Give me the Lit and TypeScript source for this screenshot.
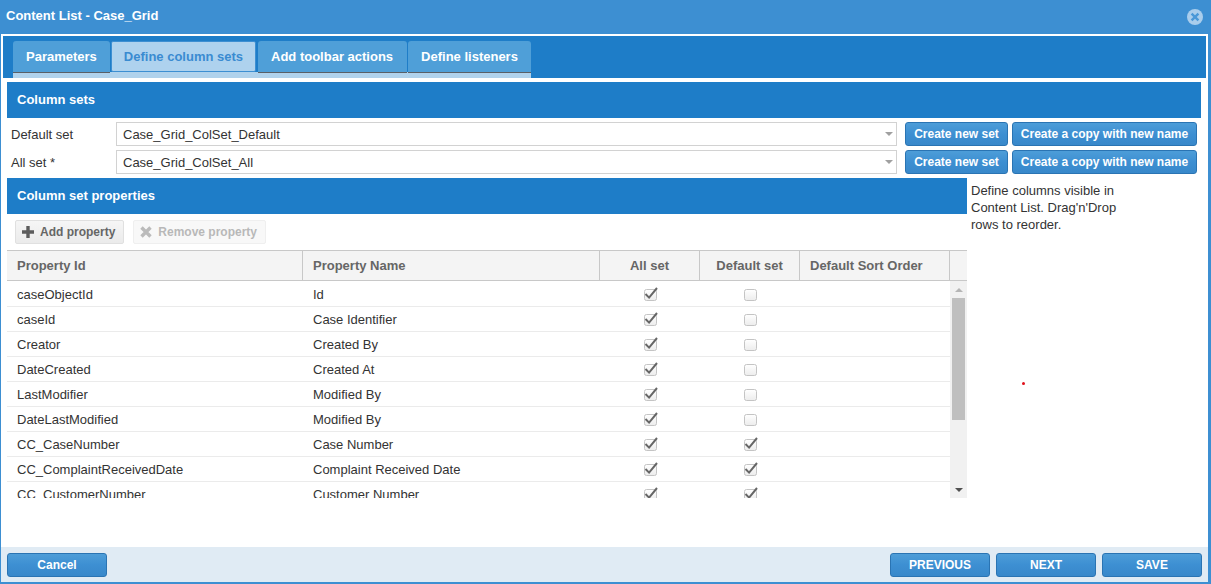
import { LitElement, html, css, svg } from 'lit';
import { customElement } from 'lit/decorators.js';

const rows = [
    ['caseObjectId', 'Id', true, false],
    ['caseId', 'Case Identifier', true, false],
    ['Creator', 'Created By', true, false],
    ['DateCreated', 'Created At', true, false],
    ['LastModifier', 'Modified By', true, false],
    ['DateLastModified', 'Modified By', true, false],
    ['CC_CaseNumber', 'Case Number', true, true],
    ['CC_ComplaintReceivedDate', 'Complaint Received Date', true, true],
    ['CC_CustomerNumber', 'Customer Number', true, true],
] as [string, string, boolean, boolean][];

const tabs = ['Parameters', 'Define column sets', 'Add toolbar actions', 'Define listeners'];

@customElement('app-root')
export class AppRoot extends LitElement {
    static styles = css`
     :host {
        display: block;
        width: 1211px;
        height: 584px;
        overflow: hidden;
        font-family: "Liberation Sans", Arial, sans-serif;
        font-size: 13px;
        color: #333;
     }

     .dialog {
        height: 584px;
        box-sizing: border-box;
        display: flex;
        flex-direction: column;
        background: #3d8fd2;
        padding: 0 3px 2px 1px;
        position: relative;
     }

     .title {
        height: 34px;
        flex: none;
        box-sizing: border-box;
        display: flex;
        align-items: center;
        justify-content: space-between;
        padding: 0 5px 3px;
        color: #fff;
        font-weight: bold;
        font-size: 13px;
     }

     .close { display: block; margin-top: 2px; }

     .body {
        flex: 1;
        min-height: 0;
        background: #fff;
        padding: 2px 2px 0 2px;
        display: flex;
        flex-direction: column;
     }

     .tabstrip {
        height: 42px;
        flex: none;
        background: #1e7dc8;
        padding: 5px 0 0 10px;
        box-sizing: border-box;
     }

     .tabs {
        display: inline-flex;
        height: 37px;
        background: linear-gradient(#1e7dc8 31px, #b0d2ec 31px);
        gap: 1px;
        align-items: flex-start;
     }

     .tab {
        height: 32px;
        box-sizing: border-box;
        padding: 0 13px;
        display: flex;
        align-items: center;
        background: #4f9fd8;
        border-bottom: 1px solid #5a5f66;
        border-radius: 3px 3px 0 0;
        color: #fff;
        font-weight: bold;
        font-size: 13px;
     }

     .tab:nth-child(3) { padding-right: 14px; }

     .tab.active {
        height: 31px;
        background: #aed2ee;
        color: #3a8bd1;
        border: 1px solid #3d8fd2;
        margin-right: 1px;
        padding: 0 12px;
        border-radius: 2px;
     }

     .section {
        background: #1e7dc8;
        color: #fff;
        font-weight: bold;
        font-size: 13px;
        height: 36px;
        box-sizing: border-box;
        display: flex;
        align-items: center;
        padding: 0 0 2px 10px;
        flex: none;
     }

     .content {
        flex: 1;
        min-height: 0;
        padding: 4px 5px 0 4px;
        display: flex;
        flex-direction: column;
     }

     .sets {
        display: flex;
        flex-direction: column;
        gap: 4px;
        padding: 4px 4px 4px 0;
     }

     .setrow {
        display: flex;
        align-items: center;
        height: 24px;
     }

     .setrow label {
        width: 105px;
        padding-left: 4px;
        flex: none;
     }

     .select {
        width: 781px;
        height: 24px;
        box-sizing: border-box;
        border: 1px solid #d2d2d2;
        display: flex;
        align-items: center;
        justify-content: space-between;
        padding: 0 3px 0 6px;
        margin-right: 8px;
        color: #333;
     }

     .caret {
        width: 0;
        height: 0;
        border-left: 4px solid transparent;
        border-right: 4px solid transparent;
        border-top: 4px solid #a0a0a0;
     }

     .btn {
        height: 24px;
        box-sizing: border-box;
        border: 1px solid #2a74b3;
        border-radius: 3px;
        background: linear-gradient(#4d9dd8, #3d8fd2 50%, #3888ca);
        color: #fff;
        font-weight: bold;
        font-size: 12px;
        display: flex;
        align-items: center;
        justify-content: center;
     }

     .btn.new { width: 103px; margin-right: 4px; }
     .btn.copy { width: 185px; }

     .lower {
        display: flex;
        flex: 1;
        min-height: 0;
     }

     .left {
        width: 960px;
        flex: none;
     }

     .help {
        width: 150px;
        padding: 4px 0 0 4px;
        line-height: 17px;
     }

     .toolbar {
        display: flex;
        gap: 9px;
        padding: 6px 8px;
     }

     .tool {
        height: 24px;
        box-sizing: border-box;
        border: 1px solid #e0e0e0;
        border-radius: 2px;
        background: linear-gradient(#f6f6f6, #ebebeb);
        display: flex;
        align-items: center;
        gap: 5px;
        padding: 0 8px 0 5px;
        color: #666;
        font-weight: bold;
        font-size: 12px;
     }

     .tool.disabled {
        background: #f8f8f8;
        border-color: #efefef;
        color: #b8b8b8;
     }

     .head {
        display: grid;
        grid-template-columns: 296px 297px 100px 100px 150px 17px;
        height: 31px;
        box-sizing: border-box;
        background: #f4f4f4;
        border-top: 1px solid #c8c8c8;
        border-bottom: 1px solid #c8c8c8;
        color: #666;
        font-weight: bold;
     }

     .head > div {
        display: flex;
        align-items: center;
        padding-left: 10px;
        border-right: 1px solid #c8c8c8;
     }

     .head > div.center {
        justify-content: center;
        padding-left: 0;
     }

     .head > div:last-child { border-right: none; }

     .gridbody {
        display: flex;
        height: 217px;
        overflow: hidden;
     }

     .gridrows {
        width: 943px;
        flex: none;
        padding-top: 1px;
     }

     .row {
        display: grid;
        grid-template-columns: 296px 297px 100px 100px 150px;
        height: 25px;
        box-sizing: border-box;
        border-bottom: 1px solid #ebebeb;
     }

     .row > div {
        display: flex;
        align-items: center;
        padding-left: 10px;
     }

     .row > div.center {
        justify-content: center;
        padding-left: 0;
     }

     .scroll {
        width: 17px;
        background: #f1f1f1;
        display: flex;
        flex-direction: column;
        align-items: center;
     }

     .arrow {
        height: 17px;
        flex: none;
        display: flex;
        align-items: center;
        justify-content: center;
     }

     .thumb {
        width: 13px;
        height: 122px;
        background: #bfbfbf;
        flex: none;
     }

     .up {
        width: 0;
        height: 0;
        border-left: 4px solid transparent;
        border-right: 4px solid transparent;
        border-bottom: 4px solid #b5b5b5;
     }

     .down {
        width: 0;
        height: 0;
        border-left: 4px solid transparent;
        border-right: 4px solid transparent;
        border-top: 4px solid #505050;
     }

     .spacer { flex: 1; }

     .footer {
        height: 35px;
        flex: none;
        background: #e0ebf4;
        margin: 0 -2px;
        padding: 6px 6px 0 6px;
        box-sizing: border-box;
        display: flex;
        gap: 6px;
     }

     .footer .btn {
        width: 100px;
        height: 24px;
     }

     .footer .grow { flex: 1; }

     .dot {
        position: absolute;
        left: 1022px;
        top: 382px;
        width: 3px;
        height: 3px;
        border-radius: 50%;
        background: #e0101a;
     }
   `;

    private check(on: boolean) {
        return html`<svg width="16" height="16" viewBox="0 0 16 16">
            <defs>
                <linearGradient id="cb" x1="0" y1="0" x2="0" y2="1">
                    <stop offset="0" stop-color="#ffffff"></stop>
                    <stop offset="1" stop-color="#ececec"></stop>
                </linearGradient>
            </defs>
            <rect x="2.5" y="3.5" width="12" height="11" rx="2" fill="url(#cb)" stroke="#c4c4c4"></rect>
            ${on ? svg`<path d="M3.5 8l3.6 3.6L15 2" fill="none" stroke="#666" stroke-width="2"></path>` : ''}
        </svg>`;
    }

    render() {
        return html`
       <div class="dialog">
            <div class="title">
                <span>Content List - Case_Grid</span>
                <svg class="close" width="16" height="16" viewBox="0 0 16 16">
                    <circle cx="8" cy="8" r="8" fill="#a9cdec"></circle>
                    <path d="M4.6 4.6l6.8 6.8M11.4 4.6l-6.8 6.8" stroke="#4a98d8" stroke-width="2.4"></path>
                </svg>
            </div>
            <div class="body">
                <div class="tabstrip">
                    <div class="tabs">
                        ${tabs.map((t, i) => html`<div class="tab ${i === 1 ? 'active' : ''}">${t}</div>`)}
                    </div>
                </div>
                <div class="content">
                    <div class="section">Column sets</div>
                    <div class="sets">
                        ${[['Default set', 'Case_Grid_ColSet_Default'], ['All set *', 'Case_Grid_ColSet_All']].map(([l, v]) => html`
                        <div class="setrow">
                            <label>${l}</label>
                            <div class="select"><span>${v}</span><span class="caret"></span></div>
                            <div class="btn new">Create new set</div>
                            <div class="btn copy">Create a copy with new name</div>
                        </div>`)}
                    </div>
                    <div class="lower">
                        <div class="left">
                            <div class="section">Column set properties</div>
                            <div class="toolbar">
                                <div class="tool">
                                    <svg width="14" height="14" viewBox="0 0 14 14"><path d="M7 1v12M1 7h12" stroke="#5c5c5c" stroke-width="3.4"></path></svg>
                                    Add property
                                </div>
                                <div class="tool disabled">
                                    <svg width="14" height="14" viewBox="0 0 14 14"><path d="M2.5 2.5l9 9M11.5 2.5l-9 9" stroke="#bbb" stroke-width="3.4"></path></svg>
                                    Remove property
                                </div>
                            </div>
                            <div class="head">
                                <div>Property Id</div>
                                <div>Property Name</div>
                                <div class="center">All set</div>
                                <div class="center">Default set</div>
                                <div>Default Sort Order</div>
                                <div></div>
                            </div>
                            <div class="gridbody">
                                <div class="gridrows">
                                    ${rows.map(r => html`
                                    <div class="row">
                                        <div>${r[0]}</div>
                                        <div>${r[1]}</div>
                                        <div class="center">${this.check(r[2])}</div>
                                        <div class="center">${this.check(r[3])}</div>
                                        <div></div>
                                    </div>`)}
                                </div>
                                <div class="scroll">
                                    <div class="arrow"><span class="up"></span></div>
                                    <div class="thumb"></div>
                                    <div class="spacer"></div>
                                    <div class="arrow"><span class="down"></span></div>
                                </div>
                            </div>
                        </div>
                        <div class="help">Define columns visible in Content List. Drag'n'Drop rows to reorder.</div>
                    </div>
                </div>
                <div class="footer">
                    <div class="btn">Cancel</div>
                    <div class="grow"></div>
                    <div class="btn">PREVIOUS</div>
                    <div class="btn">NEXT</div>
                    <div class="btn">SAVE</div>
                </div>
            </div>
            <div class="dot"></div>
        </div>
     `;
    }
}

declare global {
    interface HTMLElementTagNameMap {
        'app-root': AppRoot;
    }
}
